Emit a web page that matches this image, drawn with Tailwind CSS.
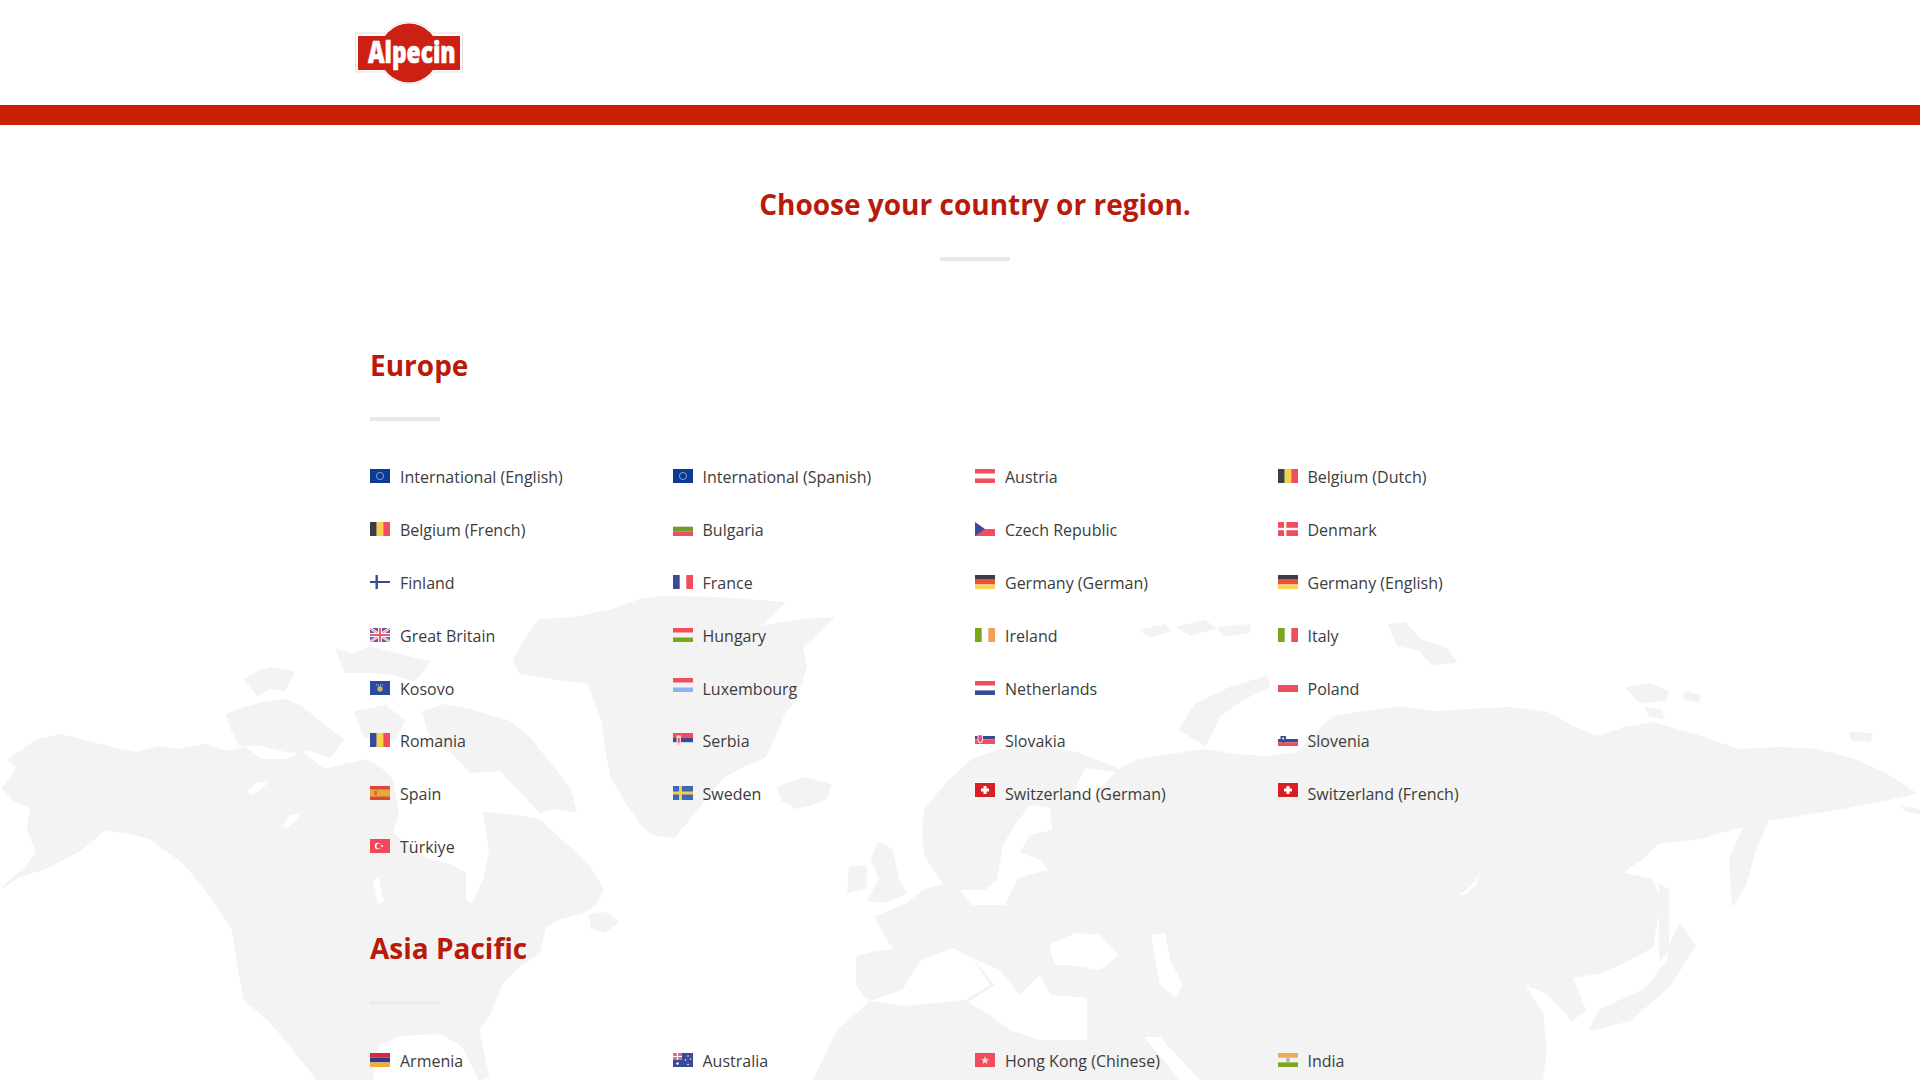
<!DOCTYPE html>
<html lang="en">
  <head>
    <meta charset="UTF-8">
    <meta name="viewport" content="width=device-width, initial-scale=1.0">
    <title>Alpecin - Choose your country or region</title>
    <script src="https://cdn.jsdelivr.net/npm/@tailwindcss/browser@4"></script>
  </head>

  <body class="bg-white font-['Open_Sans',sans-serif] text-[#3c3c3c]">
    <div class="relative h-[1080px] overflow-hidden">
      <!-- world map behind the list -->
      <svg class="absolute inset-0 w-full h-full" viewBox="0 0 1920 1080" aria-hidden="true">
        <g fill="#f3f3f3" stroke="#f3f3f3" stroke-width="2" stroke-linejoin="round">
          <!-- north america -->
          <path d="M3 788L18 767L9 760L37 740L61 735L92 743L112 748L135 753L160 747L178 750L205 745L227 752L245 748L262 760L288 760L300 752L325 770L345 765L367 760L380 768L392 780L398 813L392 833L410 848L429 860L450 865L465 873L465 900L472 905L484 880L490 850L484 813L510 815L539 820L555 835L569 847L590 868L603 890L595 905L582 913L560 918L545 927L539 953L520 965L502 983L495 1000L490 1013L478 1030L488 1075L480 1080L462 1045L440 1033L400 1035L378 1045L372 1080L318 1080L290 1045L269 1020L245 1000L238 965L233 930L210 895L184 863L150 838L125 832L104 830L80 850L45 868L18 877L3 887L25 868L37 853L28 830L31 807L14 800Z"/>
          <!-- arctic islands -->
          <path d="M245 680L258 672L270 668L294 672L288 682L285 690L270 688L258 695Z"/>
          <path d="M337 650L352 655L370 647L400 655L429 662L415 680L395 675L375 672L345 672Z"/>
          <path d="M227 715L245 708L262 703L285 700L300 706L320 722L343 740L330 757L310 750L290 752L262 745L240 745L232 730Z"/>
          <path d="M355 712L385 706L404 720L395 740L380 735L365 738Z"/>
          <path d="M423 712L445 705L470 710L510 722L530 738L539 750L555 770L570 790L576 812L555 808L540 812L520 790L500 770L470 772L455 755L440 745L428 730Z"/>
          <path d="M590 915L605 913L618 922L605 932L592 928Z"/>
          <!-- greenland, iceland -->
          <path d="M514 660L525 640L539 620L575 618L612 610L640 600L661 597L720 598L784 603L759 627L800 620L833 618L815 635L802 647L806 665L802 680L795 700L784 713L775 735L765 757L745 765L723 777L700 805L674 837L655 835L643 827L625 800L612 777L606 750L603 723L595 700L588 683L550 678L520 673Z"/>
          <path d="M778 787L805 778L830 785L826 798L810 805L796 808L782 800Z"/>
          <!-- britain, ireland -->
          <path d="M878 843L892 850L898 880L906 893L885 902L868 900L880 880L872 860Z"/>
          <path d="M850 868L866 866L866 888L848 892Z"/>
          <!-- eurasia and africa -->
          <path d="M857 985L857 957L875 952L895 950L885 935L876 917L905 905L925 890L945 885L935 870L925 855L923 830L925 810L945 785L972 760L1000 750L1025 745L1050 748L1076 753L1100 762L1119 770L1138 760L1170 755L1205 750L1235 755L1266 757L1297 753L1315 735L1333 717L1365 712L1400 707L1435 712L1468 710L1510 708L1548 713L1575 728L1597 737L1625 728L1652 723L1695 735L1738 750L1780 748L1817 750L1855 760L1891 777L1915 793L1885 800L1848 807L1768 820L1755 850L1745 885L1733 905L1730 860L1745 825L1700 838L1658 843L1640 860L1621 873L1652 880L1660 900L1658 913L1652 947L1625 962L1597 973L1572 977L1585 1010L1572 1020L1548 993L1523 983L1542 1013L1546 1050L1542 1080L814 1080L838 1030L870 1003Z"/>
          <!-- sakhalin, japan -->
          <path d="M1660 885L1668 890L1668 950L1660 960Z"/>
          <path d="M1670 945L1680 925L1695 945L1670 985L1630 1020L1590 1030L1600 1010L1645 990L1668 960Z"/>
          <!-- arctic ocean islands -->
          <path d="M1266 677L1270 686L1245 698L1220 715L1205 745L1180 730L1195 705L1230 688Z"/>
          <path d="M1141 630L1165 625L1170 631L1150 636Z"/>
          <path d="M1178 627L1205 621L1215 628L1190 635Z"/>
          <path d="M1218 628L1250 625L1248 632L1225 636Z"/>
          <path d="M1389 625L1405 623L1420 640L1445 648L1456 662L1432 664L1420 650L1398 645Z"/>
          <path d="M1627 688L1650 684L1668 692L1666 700L1640 702Z"/>
          <path d="M1685 692L1700 696L1698 702L1684 698Z"/>
          <path d="M1646 708L1660 710L1664 718L1650 716Z"/>
          <path d="M1850 733L1872 734L1870 741L1852 740Z"/>
          <path d="M1903 807L1920 810L1920 813L1906 811Z"/>
        </g>
        <g fill="#ffffff">
          <!-- lakes -->
          <path d="M246 792L258 782L268 783L260 790L252 795Z"/>
          <path d="M282 826L290 815L300 814L294 822L287 828Z"/>
          <path d="M373 880L379 878L384 902L378 904Z"/>
          <path d="M1459 895L1472 885L1480 873L1476 884L1466 894Z"/>
          <!-- baltic -->
          <path d="M997 880L1003 845L1015 825L1030 805L1050 808L1052 830L1030 835L1020 852L1040 860L1048 870L1018 878L1005 905L972 905L960 890L985 890Z"/>
          <!-- mediterranean -->
          <path d="M850 998L873 1000L902 990L921 960L953 948L972 958L990 985L965 1000L905 1006Z"/>
          <path d="M972 958L1000 970L1020 995L1040 975L1050 995L1087 998L1087 1040L1040 1040L1010 1030L990 1015L968 1002L995 985Z"/>
          <!-- black sea, caspian, red sea -->
          <path d="M1049 945L1075 933L1100 935L1119 955L1100 970L1070 965L1055 965Z"/>
          <path d="M1151 935L1165 933L1170 960L1183 985L1175 997L1160 985Z"/>
          <path d="M1144 1037L1160 1037L1200 1080L1180 1080Z"/>
          <!-- white sea -->
          <path d="M1085 768L1115 772L1090 800L1075 790Z"/>
        </g>
      </svg>

      <header class="relative h-[125px] bg-white border-b-[20px] border-[#c91f05]">
        <!-- logo -->
        <svg class="absolute left-[355px] top-[20px] w-[108px] h-[66px]" viewBox="0 0 108 66">
          <rect x="0.5" y="13" width="107" height="39" fill="#fff" stroke="#e9dfdd"/>
          <circle cx="54" cy="33" r="31" fill="#fff" stroke="#eee4e2"/>
          <rect x="3" y="16" width="102" height="34" fill="#cc2015"/>
          <circle cx="54" cy="33" r="29.5" fill="#cc2015"/>
          <text transform="translate(13 43) scale(.76 1)" fill="#fff" stroke="#fff" stroke-width="0.6" font-family="Open Sans, sans-serif" font-weight="800" font-size="30">Alpecin</text>
        </svg>
      </header>

      <main class="relative ml-[370px] w-[1210px]">
        <h1 class="mt-[61px] text-center text-[28px] leading-[36px] font-bold text-[#b81a0b]">Choose your country or region.</h1>
        <div class="mx-auto mt-[35px] h-[4px] w-[70px] bg-[#e8e8e8]"></div>

        <h2 class="mt-[86px] text-[28px] leading-[36px] font-bold text-[#b81a0b]">Europe</h2>
        <div class="mt-[34px] h-[4px] w-[70px] bg-[#e8e8e8]"></div>

        <div class="mt-[44px] grid grid-cols-4 auto-rows-[52.9px] text-[16px] leading-[24px]">
          <a class="flex items-center h-[24px]">
            <svg class="w-5 h-[14px] mr-[10px] -translate-y-px" viewBox="0 0 20 14"><rect width="20" height="14" fill="#0c3b96"/><circle cx="10" cy="7" r="3.6" fill="none" stroke="#b9c6d8" stroke-width="0.7"/></svg>
            <span>International (English)</span>
          </a>
          <a class="flex items-center h-[24px]">
            <svg class="w-5 h-[14px] mr-[10px] -translate-y-px" viewBox="0 0 20 14"><rect width="20" height="14" fill="#0c3b96"/><circle cx="10" cy="7" r="3.6" fill="none" stroke="#b9c6d8" stroke-width="0.7"/></svg>
            <span>International (Spanish)</span>
          </a>
          <a class="flex items-center h-[24px]">
            <svg class="w-5 h-[14px] mr-[10px] -translate-y-px" viewBox="0 0 20 14"><rect width="20" height="4.5" fill="#f04e5c"/><rect y="9.5" width="20" height="4.5" fill="#f04e5c"/></svg>
            <span>Austria</span>
          </a>
          <a class="flex items-center h-[24px]">
            <svg class="w-5 h-[14px] mr-[10px] -translate-y-px" viewBox="0 0 20 14"><rect width="6.7" height="14" fill="#3d3d44"/><rect x="6.7" width="6.6" height="14" fill="#f6d04d"/><rect x="13.3" width="6.7" height="14" fill="#f04e5c"/></svg>
            <span>Belgium (Dutch)</span>
          </a>

          <a class="flex items-center h-[24px]">
            <svg class="w-5 h-[14px] mr-[10px] -translate-y-px" viewBox="0 0 20 14"><rect width="6.7" height="14" fill="#3d3d44"/><rect x="6.7" width="6.6" height="14" fill="#f6d04d"/><rect x="13.3" width="6.7" height="14" fill="#f04e5c"/></svg>
            <span>Belgium (French)</span>
          </a>
          <a class="flex items-center h-[24px]">
            <svg class="w-5 h-[14px] mr-[10px] -translate-y-px" viewBox="0 0 20 14"><rect y="4.7" width="20" height="4.7" fill="#6f9a2e"/><rect y="9.4" width="20" height="4.6" fill="#f04e5c"/></svg>
            <span>Bulgaria</span>
          </a>
          <a class="flex items-center h-[24px]">
            <svg class="w-5 h-[14px] mr-[10px] -translate-y-px" viewBox="0 0 20 14"><rect y="7" width="20" height="7" fill="#f04e5c"/><path d="M0 0L10 7L0 14Z" fill="#3c4a96"/></svg>
            <span>Czech Republic</span>
          </a>
          <a class="flex items-center h-[24px]">
            <svg class="w-5 h-[14px] mr-[10px] -translate-y-px" viewBox="0 0 20 14"><rect width="20" height="14" fill="#f04e5c"/><rect x="6" width="2.4" height="14" fill="#fff"/><rect y="5.8" width="20" height="2.4" fill="#fff"/></svg>
            <span>Denmark</span>
          </a>

          <a class="flex items-center h-[24px]">
            <svg class="w-5 h-[14px] mr-[10px] -translate-y-px" viewBox="0 0 20 14"><rect x="5.5" width="2.4" height="14" fill="#3c4a96"/><rect y="6" width="20" height="2" fill="#3c4a96"/></svg>
            <span>Finland</span>
          </a>
          <a class="flex items-center h-[24px]">
            <svg class="w-5 h-[14px] mr-[10px] -translate-y-px" viewBox="0 0 20 14"><rect width="6.7" height="14" fill="#3c4a96"/><rect x="13.3" width="6.7" height="14" fill="#f04e5c"/></svg>
            <span>France</span>
          </a>
          <a class="flex items-center h-[24px]">
            <svg class="w-5 h-[14px] mr-[10px] -translate-y-px" viewBox="0 0 20 14"><rect width="20" height="4.7" fill="#3d3d44"/><rect y="4.7" width="20" height="4.7" fill="#f04e3c"/><rect y="9.4" width="20" height="4.6" fill="#fbd35c"/></svg>
            <span>Germany (German)</span>
          </a>
          <a class="flex items-center h-[24px]">
            <svg class="w-5 h-[14px] mr-[10px] -translate-y-px" viewBox="0 0 20 14"><rect width="20" height="4.7" fill="#3d3d44"/><rect y="4.7" width="20" height="4.7" fill="#f04e3c"/><rect y="9.4" width="20" height="4.6" fill="#fbd35c"/></svg>
            <span>Germany (English)</span>
          </a>

          <a class="flex items-center h-[24px]">
            <svg class="w-5 h-[14px] mr-[10px] -translate-y-px" viewBox="0 0 20 14"><rect width="20" height="14" fill="#5b60a8"/><path d="M0 0L20 14M20 0L0 14" stroke="#fff" stroke-width="2.6"/><path d="M0 0L20 14M20 0L0 14" stroke="#ee6a80" stroke-width="0.9"/><path d="M10 0V14M0 7H20" stroke="#fff" stroke-width="4"/><path d="M10 0V14M0 7H20" stroke="#ee5a70" stroke-width="2.2"/></svg>
            <span>Great Britain</span>
          </a>
          <a class="flex items-center h-[24px]">
            <svg class="w-5 h-[14px] mr-[10px] -translate-y-px" viewBox="0 0 20 14"><rect width="20" height="4.5" fill="#f04e5c"/><rect y="9.5" width="20" height="4.5" fill="#7aa61a"/></svg>
            <span>Hungary</span>
          </a>
          <a class="flex items-center h-[24px]">
            <svg class="w-5 h-[14px] mr-[10px] -translate-y-px" viewBox="0 0 20 14"><rect width="6.7" height="14" fill="#7aa61a"/><rect x="13.3" width="6.7" height="14" fill="#f3a055"/></svg>
            <span>Ireland</span>
          </a>
          <a class="flex items-center h-[24px]">
            <svg class="w-5 h-[14px] mr-[10px] -translate-y-px" viewBox="0 0 20 14"><rect width="6.7" height="14" fill="#7aa61a"/><rect x="13.3" width="6.7" height="14" fill="#f04e5c"/></svg>
            <span>Italy</span>
          </a>

          <a class="flex items-center h-[24px]">
            <svg class="w-5 h-[14px] mr-[10px] -translate-y-px" viewBox="0 0 20 14"><rect width="20" height="14" fill="#2a4aa0"/><circle cx="10" cy="8" r="2.7" fill="#c9b27a"/><path d="M6 4H14" stroke="#dfe4f0" stroke-width="0.9" stroke-dasharray="1 1"/></svg>
            <span>Kosovo</span>
          </a>
          <a class="flex items-center h-[24px]">
            <svg class="w-5 h-[14px] mr-[10px] -translate-y-1" viewBox="0 0 20 14"><rect width="20" height="4.5" fill="#f04e5c"/><rect y="9.5" width="20" height="4.5" fill="#8ab4ee"/></svg>
            <span>Luxembourg</span>
          </a>
          <a class="flex items-center h-[24px]">
            <svg class="w-5 h-[14px] mr-[10px] -translate-y-px" viewBox="0 0 20 14"><rect width="20" height="4.7" fill="#f04e5c"/><rect y="4.7" width="20" height="4.7" fill="#fff"/><rect y="9.4" width="20" height="4.6" fill="#3c4a96"/></svg>
            <span>Netherlands</span>
          </a>
          <a class="flex items-center h-[24px]">
            <svg class="w-5 h-[14px] mr-[10px] -translate-y-1" viewBox="0 0 20 14"><rect y="7" width="20" height="7" fill="#f04e5c"/></svg>
            <span>Poland</span>
          </a>

          <a class="flex items-center h-[24px]">
            <svg class="w-5 h-[14px] mr-[10px] -translate-y-px" viewBox="0 0 20 14"><rect width="6.7" height="14" fill="#3c4a96"/><rect x="6.7" width="6.6" height="14" fill="#f8d24a"/><rect x="13.3" width="6.7" height="14" fill="#f04e5c"/></svg>
            <span>Romania</span>
          </a>
          <a class="flex items-center h-[24px]">
            <svg class="w-5 h-[14px] mr-[10px] -translate-y-px" viewBox="0 0 20 14"><rect width="20" height="4.5" fill="#f04e5c"/><rect y="4.5" width="20" height="4.7" fill="#3c4a96"/><path d="M3.5 2.5H8V9.5Q8 12 5.7 12.5Q3.5 12 3.5 9.5Z" fill="#f7d0d2"/><rect x="5" y="5" width="1.6" height="4.5" fill="#d8505c"/></svg>
            <span>Serbia</span>
          </a>
          <a class="flex items-center h-[24px]">
            <svg class="w-5 h-[14px] mr-[10px] -translate-y-px" viewBox="0 0 20 14"><rect y="3" width="20" height="3.4" fill="#3c4a96"/><rect y="6.4" width="20" height="4.6" fill="#f04e5c"/><path d="M2.5 1.5H8V7Q8 9.5 5.2 10.5Q2.5 9.5 2.5 7Z" fill="#fff"/><path d="M3.3 2.2H7.2V6.8Q7.2 8.6 5.2 9.5Q3.3 8.6 3.3 6.8Z" fill="#e5536a"/></svg>
            <span>Slovakia</span>
          </a>
          <a class="flex items-center h-[24px]">
            <svg class="w-5 h-[14px] mr-[10px] -translate-y-px" viewBox="0 0 20 14"><rect y="6" width="20" height="3.4" fill="#3c4a96"/><rect y="9.4" width="20" height="3.6" fill="#f04e5c"/><path d="M2.5 3H8V7Q8 9 5.2 10Q2.5 9 2.5 7Z" fill="#3c4a96"/><circle cx="5.2" cy="5.5" r="1" fill="#fff"/></svg>
            <span>Slovenia</span>
          </a>

          <a class="flex items-center h-[24px]">
            <svg class="w-5 h-[14px] mr-[10px] -translate-y-px" viewBox="0 0 20 14"><rect width="20" height="14" fill="#e4a83c"/><rect width="20" height="3.4" fill="#d9483a"/><rect y="10.6" width="20" height="3.4" fill="#d9483a"/><rect x="4" y="5" width="3" height="4" fill="#d9683a"/></svg>
            <span>Spain</span>
          </a>
          <a class="flex items-center h-[24px]">
            <svg class="w-5 h-[14px] mr-[10px] -translate-y-px" viewBox="0 0 20 14"><rect width="20" height="14" fill="#3c68b4"/><rect x="6" width="3" height="14" fill="#f0ce55"/><rect y="5.5" width="20" height="3" fill="#f0ce55"/></svg>
            <span>Sweden</span>
          </a>
          <a class="flex items-center h-[24px]">
            <svg class="w-5 h-[14px] mr-[10px] -translate-y-1" viewBox="0 0 20 14"><rect width="20" height="14" fill="#d81f26"/><rect x="8.5" y="3" width="3" height="8" fill="#fff"/><rect x="6" y="5.5" width="8" height="3" fill="#fff"/></svg>
            <span>Switzerland (German)</span>
          </a>
          <a class="flex items-center h-[24px]">
            <svg class="w-5 h-[14px] mr-[10px] -translate-y-1" viewBox="0 0 20 14"><rect width="20" height="14" fill="#d81f26"/><rect x="8.5" y="3" width="3" height="8" fill="#fff"/><rect x="6" y="5.5" width="8" height="3" fill="#fff"/></svg>
            <span>Switzerland (French)</span>
          </a>

          <a class="flex items-center h-[24px]">
            <svg class="w-5 h-[14px] mr-[10px] -translate-y-px" viewBox="0 0 20 14"><rect width="20" height="14" fill="#f2485a"/><circle cx="8" cy="7" r="3.2" fill="#fff"/><circle cx="9" cy="7" r="2.6" fill="#f2485a"/><circle cx="12" cy="7" r="1" fill="#fff"/></svg>
            <span>Türkiye</span>
          </a>
        </div>

        <h2 class="mt-[42px] text-[28px] leading-[36px] font-bold text-[#b81a0b]">Asia Pacific</h2>
        <div class="mt-[35px] h-[4px] w-[70px] bg-[#ececec]"></div>

        <div class="mt-[44px] grid grid-cols-4 auto-rows-[52.9px] text-[16px] leading-[24px]">
          <a class="flex items-center h-[24px]">
            <svg class="w-5 h-[14px] mr-[10px] -translate-y-px" viewBox="0 0 20 14"><rect width="20" height="4.7" fill="#d9263a"/><rect y="4.7" width="20" height="4.7" fill="#2b3d90"/><rect y="9.4" width="20" height="4.6" fill="#f3ad3c"/></svg>
            <span>Armenia</span>
          </a>
          <a class="flex items-center h-[24px]">
            <svg class="w-5 h-[14px] mr-[10px] -translate-y-px" viewBox="0 0 20 14"><rect width="20" height="14" fill="#3c4a96"/><rect width="9" height="7" fill="#d9708c"/><path d="M0 3.5H9M4.5 0V7" stroke="#fff" stroke-width="1.2"/><circle cx="4.5" cy="10.5" r="1.2" fill="#fff"/><circle cx="15" cy="3" r="0.8" fill="#fff"/><circle cx="17.5" cy="6" r="0.8" fill="#fff"/><circle cx="12.5" cy="7" r="0.8" fill="#fff"/><circle cx="15" cy="11.5" r="0.8" fill="#fff"/></svg>
            <span>Australia</span>
          </a>
          <a class="flex items-center h-[24px]">
            <svg class="w-5 h-[14px] mr-[10px] -translate-y-px" viewBox="0 0 20 14"><rect width="20" height="14" fill="#f04e5c"/><path d="M10 3L11 6L14 6.2L11.7 8L12.5 11L10 9.3L7.5 11L8.3 8L6 6.2L9 6Z" fill="#fbdfe0"/></svg>
            <span>Hong Kong (Chinese)</span>
          </a>
          <a class="flex items-center h-[24px]">
            <svg class="w-5 h-[14px] mr-[10px] -translate-y-px" viewBox="0 0 20 14"><rect width="20" height="4.7" fill="#f3a955"/><rect y="9.4" width="20" height="4.6" fill="#7aa61a"/><circle cx="10" cy="7" r="1.4" fill="none" stroke="#3c4a96" stroke-width="0.6"/></svg>
            <span>India</span>
          </a>
        </div>
      </main>
    </div>
  </body>
</html>
